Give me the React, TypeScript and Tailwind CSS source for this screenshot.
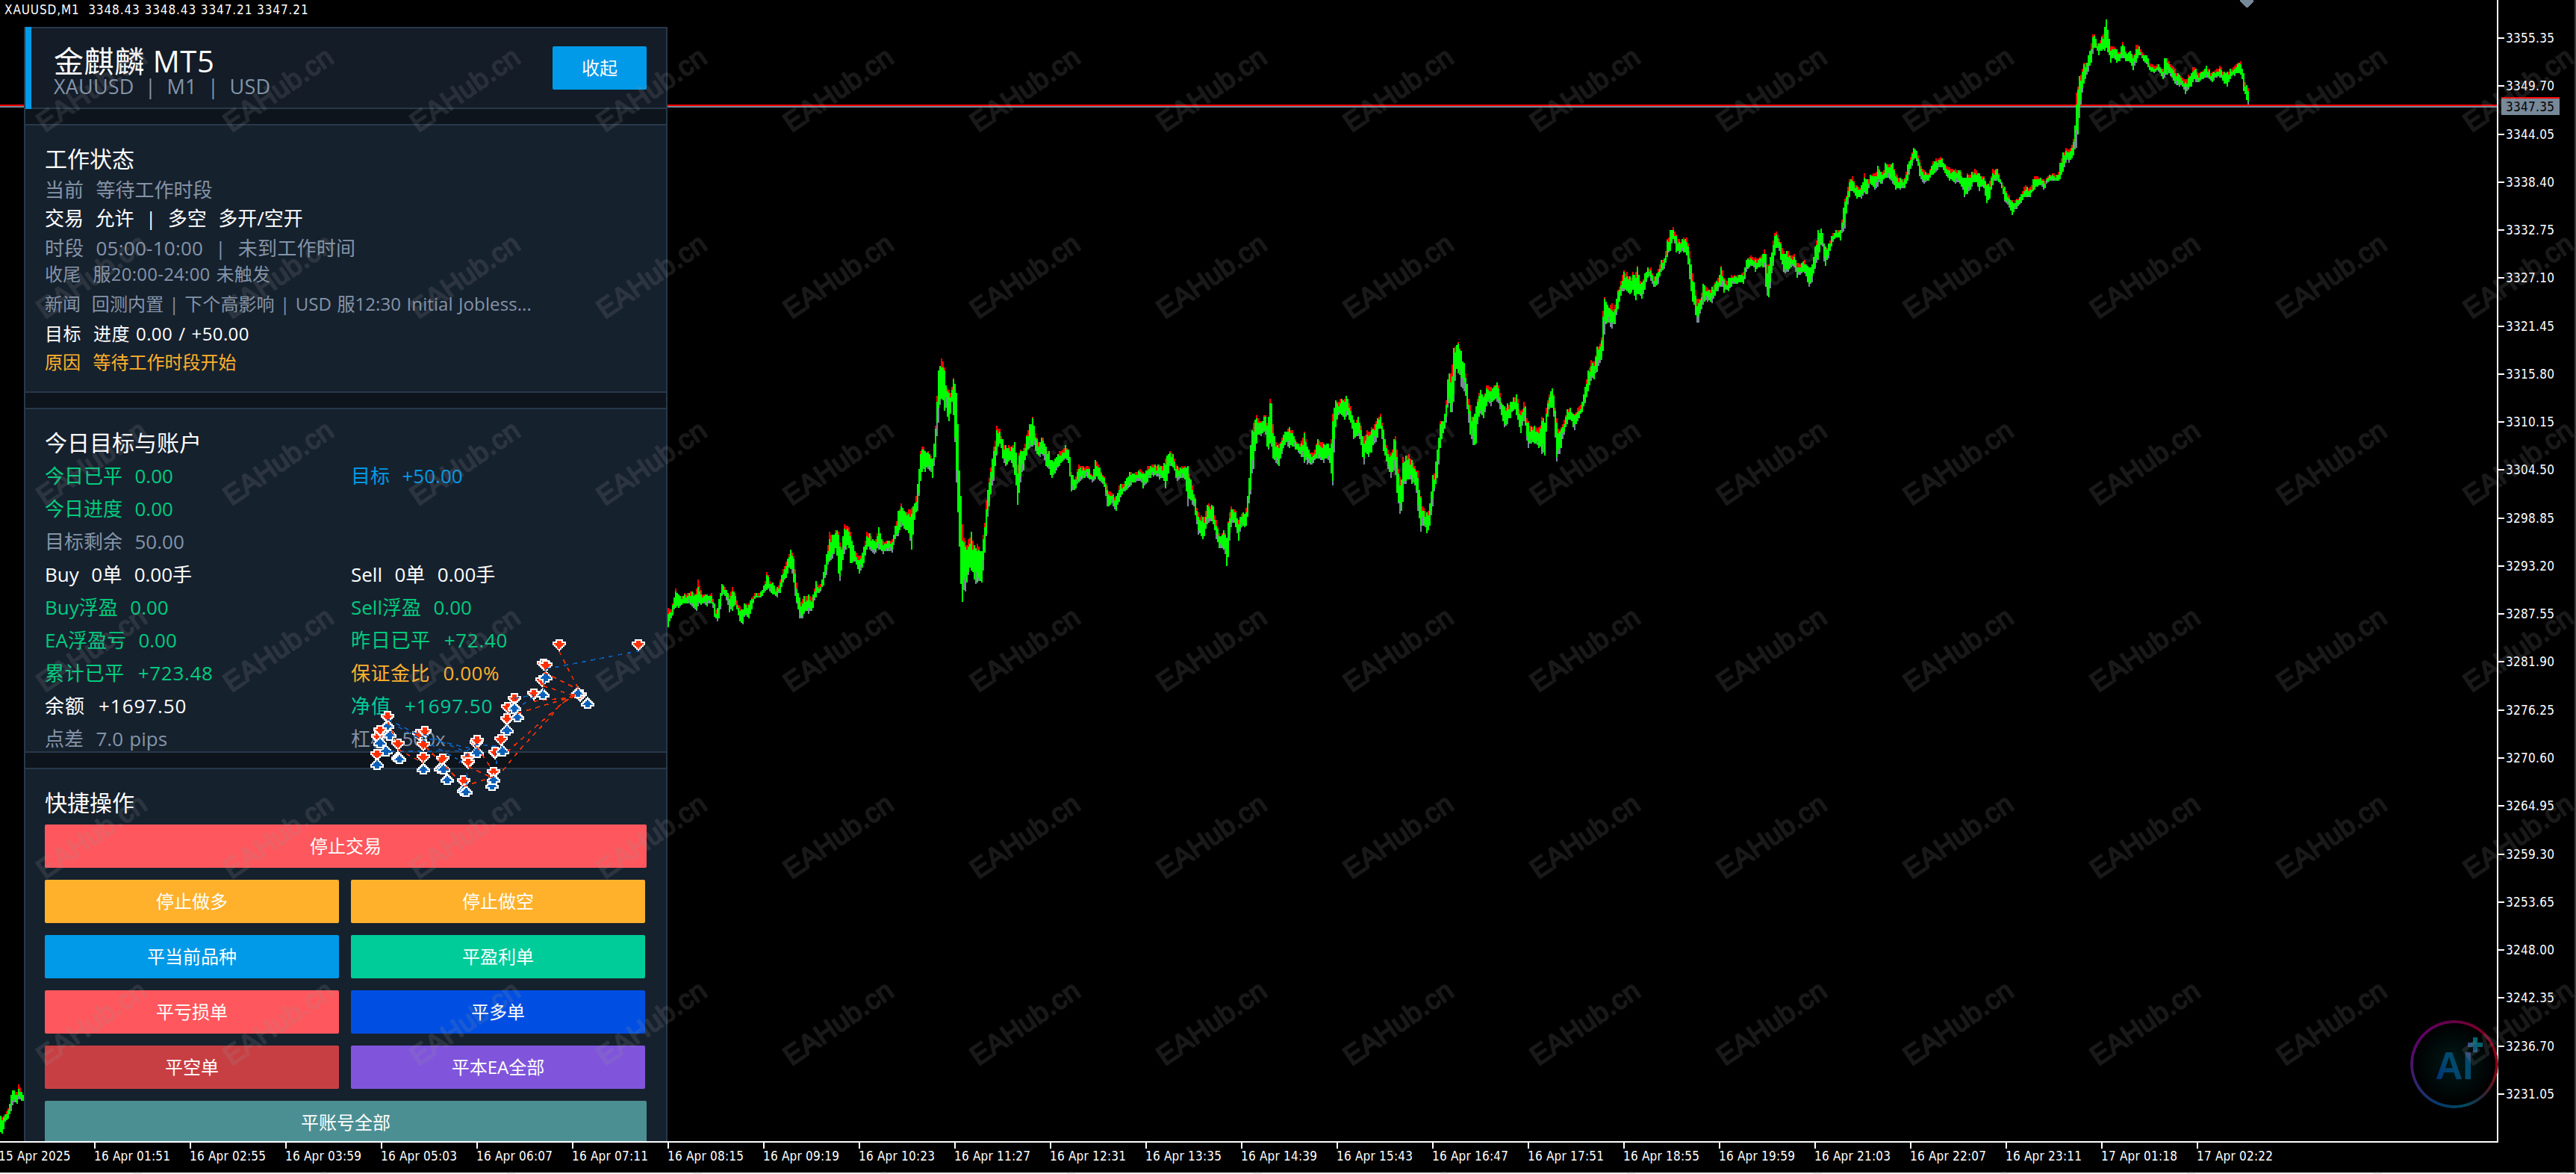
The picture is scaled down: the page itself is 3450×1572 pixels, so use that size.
import React from 'react';

interface Trace {
  x: number;
  y: number;
  sx: number;
  sy: number;
  points: string;
}

// every point is "x high low" in the local units of its trace
const TRACES: Trace[] = [
  {
    x: 0,
    y: 1420,
    sx: 1 / 3,
    sy: 1 / 3,
    points:
      '0 220 290,8 230 293,14 215 265,22 205 240,32 190 232,40 150 215,46 118 190,52 115 165,58 130 165,66 125 172,74 90 150,80 115 160,86 130 165,94 145 165',
  },
  {
    x: 880,
    y: 440,
    sx: 0.6378,
    sy: 1 / 3,
    points:
      '22 1120 1200,30 1120 1160,37 1040 1120,45 1075 1125,55 1065 1105,70 1055 1110,80 1060 1140,85 1005 1115,92 1060 1110,103 1068 1115,113 1062 1105,120 1110 1165,125 1130 1180,130 1070 1160,135 1022 1070,143 1045 1080,150 1070 1140,156 1035 1140,163 1060 1110,168 1105 1145,173 1120 1180,178 1130 1198,183 1100 1150,190 1110 1170,197 1085 1130,203 1062 1085,218 1055 1080,225 1020 1060,230 968 1050,237 1020 1060,243 1022 1070,250 1045 1080,257 1010 1060,263 970 1020,270 935 1000,278 890 955,284 893 1000,290 990 1100,297 1080 1165,303 1090 1175,308 1070 1140,316 1065 1145,325 1075 1130,332 1015 1080,340 1035 1060,347 990 1040,354 910 990,360 815 940,366 830 930,375 805 880,380 820 1000,384 880 1018,391 788 910,400 790 860,405 820 950,412 880 930,424 915 985,432 880 950,440 810 880,446 825 890,455 850 905,464 800 890,472 850 905,485 850 895,492 850 905,498 795 850,506 720 830,512 700 790,519 740 810,527 725 825,534 720 900,540 700 750,546 620 730,552 490 610,557 465 560,562 495 580,567 490 560,577 520 600,583 400 520,588 175 410,593 150 300,597 108 270,601 135 330,607 240 345,613 250 380,618 230 290,622 188 370,626 210 580,630 370 720,635 600 980,639 780 1105,645 850 1070,652 850 990,660 810 970,667 890 1030,672 855 1020,680 905 1030,685 800 950,690 690 830,697 590 700,705 480 620,712 388 510,718 400 460,725 450 530,732 470 560,738 465 530,745 470 545,751 455 600,756 550 715,760 480 640,768 480 570,774 430 510,780 390 480,788 350 470,795 430 500,802 460 520,807 430 500,815 470 550,821 490 560,827 530 605,835 520 580,845 490 545,857 465 520,864 480 560,868 570 655,876 610 650,883 545 620,895 555 600,905 550 600,912 590 620,920 518 600,928 560 610,937 590 630,945 640 730,952 655 700,962 680 735,970 620 690,980 620 655,992 570 635,1003 575 620,1013 565 610,1020 575 645,1030 550 610,1040 545 590,1055 545 605,1062 550 600,1066 520 645,1076 488 550,1083 510 560,1090 555 615,1100 550 600,1108 555 610,1112 540 720,1120 610 690,1128 670 740,1135 740 830,1146 760 850,1155 700 780,1165 700 770,1172 760 840,1180 830 890,1190 805 890,1195 840 958,1199 750 900,1205 710 780,1213 730 790,1219 770 855,1228 735 790,1234 745 810,1240 650 740,1246 430 650,1250 385 580,1259 340 440,1268 380 430,1275 340 410,1281 390 500,1287 250 450,1293 410 540,1303 470 560,1310 440 510,1318 410 460,1325 392 480,1332 405 470,1340 450 490,1350 460 510,1357 410 540,1365 480 550,1375 500 545,1387 440 520,1398 460 540,1407 455 520,1413 480 560,1418 325 640,1423 290 400,1433 280 340,1442 285 370,1447 265 350,1455 310 380,1462 370 450,1470 350 430,1477 390 470,1482 440 555,1488 405 500,1494 420 520,1500 390 490,1510 365 450,1517 338 390,1524 400 490,1532 480 560,1540 500 600,1548 415 560,1553 500 680,1560 620 760,1566 560 680',
  },
  {
    x: 1850,
    y: 180,
    sx: 0.574,
    sy: 0.3444,
    points:
      '50 1255 1390,57 1250 1350,64 1240 1340,70 1270 1360,78 1290 1365,84 1310 1470,90 1400 1545,97 1450 1520,106 1470 1555,112 1430 1520,118 1330 1450,124 1290 1370,130 1210 1330,136 1115 1220,145 1105 1150,150 1030 1120,155 910 1030,161 930 1090,166 835 1070,172 820 930,178 808 930,184 840 980,192 890 1000,198 960 1060,204 1040 1160,212 1100 1210,219 1060 1210,225 1010 1100,231 988 1080,238 1020 1110,245 970 1050,255 985 1060,263 970 1030,270 960 1040,277 1020 1080,285 1060 1140,291 1045 1135,300 1040 1100,307 1020 1070,315 1005 1095,323 1080 1165,332 1035 1110,340 1110 1220,350 1135 1200,357 1135 1200,365 1145 1215,374 1090 1245,380 1120 1250,385 1030 1110,396 980 1050,401 1010 1100,408 1110 1280,415 1150 1240,425 1110 1170,433 1065 1120,440 1060 1110,448 1090 1160,457 1060 1110,467 1040 1080,475 970 1040,482 910 990,487 875 960,495 885 955,503 815 920,513 790 870,516 670 840,520 620 760,527 670 730,535 655 760,543 670 740,549 610 690,557 570 630,564 525 610,571 535 610,580 555 625,586 535 600,591 540 650,596 510 620,603 570 630,608 575 645,614 535 600,621 515 550,628 520 570,635 555 595,643 530 595,650 490 540,660 480 520,666 400 470,673 370 450,680 360 400,686 390 460,694 410 465,703 402 460,711 402 470,717 440 550,723 520 640,730 590 690,737 640 745,744 630 690,750 575 660,760 600 650,770 590 655,778 570 620,785 555 605,792 500 590,798 560 615,808 560 610,815 548 590,830 545 580,845 530 580,851 480 530,862 470 510,872 480 535,882 475 515,893 445 520,897 480 640,901 520 648,907 470 590,913 410 510,918 368 450,925 395 440,932 425 500,938 460 540,946 445 540,953 470 520,962 465 515,968 500 560,978 500 540,987 485 540,995 520 595,1003 510 580,1011 430 520,1017 370 490,1026 362 420,1033 440 515,1041 430 490,1050 390 430,1060 368 400,1070 370 410,1076 290 380,1080 250 370,1086 215 280,1091 170 240,1098 165 220,1108 200 250,1117 205 255,1126 150 225,1131 180 240,1140 155 190,1150 150 215,1158 118 200,1168 150 190,1174 110 170,1184 120 170,1191 105 190,1198 150 215,1210 170 215,1220 170 210,1228 105 170,1236 75 125,1242 48 90,1249 70 110,1256 110 180,1265 140 190,1275 150 180,1284 105 160,1294 93 145,1305 88 125,1314 120 155,1325 130 180,1338 135 190,1350 140 190,1358 170 245,1367 150 230,1375 150 210,1385 130 180,1394 150 220,1403 155 200,1411 190 265,1417 190 260,1426 130 190,1436 135 180,1445 180 205,1453 205 260,1463 235 285,1471 260 318,1480 250 290,1490 240 270,1500 195 240,1511 210 250,1522 160 215,1535 165 195,1545 175 215,1556 158 180,1567 150 180',
  },
  {
    x: 2650,
    y: 0,
    sx: 0.5102,
    sy: 1 / 3,
    points:
      '195 700 725,207 697 730,213 640 720,220 610 690,228 595 650,236 600 655,246 570 630,251 500 600,256 330 590,262 305 480,268 300 400,273 250 345,280 255 310,286 220 290,293 180 260,299 128 205,305 155 185,312 180 225,320 150 200,328 130 210,332 68 190,337 120 210,345 185 255,352 185 230,360 195 255,368 210 250,377 165 230,385 210 250,395 200 250,404 225 280,413 175 250,420 185 220,430 215 245,440 222 260,450 255 290,460 262 295,470 260 285,482 280 320,488 212 310,494 235 300,503 260 310,515 280 340,525 300 350,533 310 345,540 320 378,548 300 360,556 300 350,562 262 320,570 280 335,580 290 325,597 265 310,610 290 335,622 275 310,633 265 310,643 290 335,652 290 350,660 275 310,672 265 305,680 250 290,687 247 300,693 290 360,700 335 390,707 360 430',
  },
];

const snap = (n: number) => Math.round(n / 2) * 2;

function buildBars() {
  let seed = 11;
  const rand = () => {
    seed = (seed * 16807) % 2147483647;
    return seed / 2147483647;
  };
  let up = '';
  let mid = '';
  let down = '';
  for (const t of TRACES) {
    const pts = t.points.split(',').map((p) => {
      const [x, hi, lo] = p.split(' ').map(Number);
      return { x: t.x + x * t.sx, hi: t.y + hi * t.sy, lo: t.y + lo * t.sy };
    });
    let i = 0;
    for (let x = snap(pts[0].x); x <= pts[pts.length - 1].x + 1; x += 2) {
      while (i < pts.length - 2 && pts[i + 1].x < x) i++;
      const a = pts[i];
      const b = pts[i + 1];
      const k = Math.min(1, Math.max(0, (x - a.x) / (b.x - a.x)));
      const peak = Math.abs(x - a.x) <= 1 || Math.abs(x - b.x) <= 1;
      const range = a.lo - a.hi + (b.lo - b.hi - a.lo + a.hi) * k;
      const wobble = peak ? 0 : range * 0.16;
      const hi = snap(a.hi + (b.hi - a.hi) * k + rand() * wobble);
      const lo = snap(a.lo + (b.lo - a.lo) * k - rand() * wobble);
      const top = rand() < 0.4 ? hi : snap(hi + 2 + rand() * range * 0.22);
      const bottom = rand() < 0.5 ? lo : snap(lo - rand() * range * 0.35);
      up += `M${x + 1} ${hi}V${top}`;
      mid += `M${x + 1} ${top}V${bottom}`;
      down += `M${x + 1} ${bottom}V${lo}`;
    }
  }
  return { up, mid, down };
}

const BARS = buildBars();

function PriceChart() {
  return (
    <svg className="block" width="3344" height="1528" viewBox="0 0 3344 1528" shapeRendering="crispEdges">
      <rect x="0" y="140" width="3344" height="2" fill="#ff0000" />
      <rect x="0" y="142" width="3344" height="2" fill="#778899" />
      <path d={BARS.up} stroke="#ff0000" strokeWidth="2" />
      <path d={BARS.down} stroke="#778899" strokeWidth="2" />
      <path d={BARS.mid} stroke="#00ff00" strokeWidth="2" />
      <path d="M3000 0H3018V2L3010 10H3008L3000 2Z" fill="#778899" />
    </svg>
  );
}

const PRICES = Array.from({ length: 23 }, (_, i) => (3355.35 - i * 5.65).toFixed(2));

const TIMES = [
  '16 Apr 01:51', '16 Apr 02:55', '16 Apr 03:59', '16 Apr 05:03', '16 Apr 06:07', '16 Apr 07:11',
  '16 Apr 08:15', '16 Apr 09:19', '16 Apr 10:23', '16 Apr 11:27', '16 Apr 12:31', '16 Apr 13:35',
  '16 Apr 14:39', '16 Apr 15:43', '16 Apr 16:47', '16 Apr 17:51', '16 Apr 18:55', '16 Apr 19:59',
  '16 Apr 21:03', '16 Apr 22:07', '16 Apr 23:11', '17 Apr 01:18', '17 Apr 02:22',
];

function PriceAxis() {
  return (
    <div className="relative w-[106px] h-[1530px] border-l-2 border-white tracking-[0.3px]">
      <div className="h-[1474px] pt-[42px] flex flex-col justify-between">
        {PRICES.map((p) => (
          <div key={p} className="flex items-center h-[18px]">
            <span className="w-2 h-0.5 bg-white" />
            <span className="ml-0.5 leading-[18px]">{p}</span>
          </div>
        ))}
      </div>
      <div className="absolute left-1 top-[130px] w-[78px] h-6 border-t-2 border-[#ff0000] bg-[#778899] pl-1.5 leading-[22px] text-black">
        3347.35
      </div>
    </div>
  );
}

function TimeAxis() {
  return (
    <div className="flex h-10 overflow-hidden whitespace-nowrap tracking-[0.2px]">
      <div className="w-[126px] shrink-0 pt-[9px] -indent-0.5 leading-[18px]">15 Apr 2025</div>
      {TIMES.map((t) => (
        <div key={t} className="w-32 shrink-0">
          <div className="w-0.5 h-2 bg-white" />
          <div className="pt-px leading-[18px]">{t}</div>
        </div>
      ))}
    </div>
  );
}

const STATUS = [
  { text: '当前  等待工作时段', cls: 'mt-[9px] text-[26px] [word-spacing:1.5px] text-[#8494a8]' },
  { text: '交易  允许  |  多空  多开/空开', cls: 'mt-1.5 text-[26px] [word-spacing:1px] text-white' },
  { text: '时段  05:00-10:00  |  未到工作时间', cls: 'mt-2 text-[26px] tracking-[0.25px] [word-spacing:1px] text-[#8494a8]' },
  { text: '收尾  服20:00-24:00 未触发', cls: 'mt-[3px] text-[24px] tracking-[0.25px] [word-spacing:1.5px] text-[#8494a8]' },
  { text: '新闻  回测内置 | 下个高影响 | USD 服12:30 Initial Jobless...', cls: 'mt-2 text-[24px] tracking-[0.1px] [word-spacing:1px] text-[#8494a8]' },
  { text: '目标  进度 0.00 / +50.00', cls: 'mt-2 text-[24px] tracking-[0.4px] [word-spacing:1.5px] text-white' },
  { text: '原因  等待工作时段开始', cls: 'mt-1.5 text-[24px] [word-spacing:2px] text-[#ffb12b]' },
];

const ACCOUNT = [
  { text: '今日已平  0.00', cls: 'text-[#00cc7e]' },
  { text: '目标  +50.00', cls: 'text-[#009ae8]' },
  { text: '今日进度  0.00', cls: 'text-[#00cc7e]' },
  { text: '', cls: '' },
  { text: '目标剩余  50.00', cls: 'text-[#8494a8]' },
  { text: '', cls: '' },
  { text: 'Buy  0单  0.00手', cls: 'text-white' },
  { text: 'Sell  0单  0.00手', cls: 'text-white' },
  { text: 'Buy浮盈  0.00', cls: 'text-[#00cc7e]' },
  { text: 'Sell浮盈  0.00', cls: 'text-[#00cc7e]' },
  { text: 'EA浮盈亏  0.00', cls: 'text-[#00cc7e]' },
  { text: '昨日已平  +72.40', cls: 'tracking-[0.7px] text-[#00cc7e]' },
  { text: '累计已平  +723.48', cls: 'tracking-[0.7px] text-[#00cc7e]' },
  { text: '保证金比  0.00%', cls: 'tracking-[0.5px] text-[#ffb12b]' },
  { text: '余额  +1697.50', cls: 'tracking-[0.9px] text-white' },
  { text: '净值  +1697.50', cls: 'tracking-[0.9px] text-[#00cc99]' },
  { text: '点差  7.0 pips', cls: 'text-[#8494a8]' },
  { text: '杠杆  500x', cls: 'text-[#8494a8]' },
];

const ACTIONS = [
  { text: '停止交易', cls: 'col-span-2 w-[806px] bg-[#ff575d]' },
  { text: '停止做多', cls: 'bg-[#ffb12b]' },
  { text: '停止做空', cls: 'bg-[#ffb12b]' },
  { text: '平当前品种', cls: 'bg-[#009ae8]' },
  { text: '平盈利单', cls: 'bg-[#00cc99]' },
  { text: '平亏损单', cls: 'bg-[#ff575d]' },
  { text: '平多单', cls: 'bg-[#004fe2]' },
  { text: '平空单', cls: 'bg-[#c83f43]' },
  { text: '平本EA全部', cls: 'bg-[#8055dc]' },
  { text: '平账号全部', cls: 'col-span-2 w-[806px] bg-[#4c8f93]' },
];

function Panel() {
  return (
    <aside className="absolute left-8 top-9 w-[862px] h-[1492px] overflow-hidden bg-[#0d141b] border-x-2 border-[#28384a] flex flex-col gap-5 whitespace-pre [font-stretch:normal] font-['Open_Sans','Noto_Sans_CJK_SC',sans-serif]">
      <header className="relative h-[110px] shrink-0 bg-[#131c27] border-y-2 border-[#28384a] flex justify-between pl-[38px] pr-[26px]">
        <div className="absolute left-0 -top-0.5 w-2 h-[110px] bg-[#009ae8]" />
        <div className="pt-[23px]">
          <h1 className="text-[40px] leading-[42px] tracking-[0.6px] text-white">金麒麟 MT5</h1>
          <p className="text-[27px] leading-[26px] tracking-[0.2px] text-[#8494a8]">XAUUSD  |  M1  |  USD</p>
        </div>
        <button className="mt-6 w-[126px] h-[58px] rounded-[2px] bg-[#009ae8] text-[24px] text-white">收起</button>
      </header>

      <section className="h-[360px] shrink-0 bg-[#16212e] border-y-2 border-[#28384a] pl-[26px] pt-[29px]">
        <h2 className="text-[30px] leading-8 text-white">工作状态</h2>
        {STATUS.map((row) => (
          <p key={row.text} className={`h-8 leading-8 ${row.cls}`}>{row.text}</p>
        ))}
      </section>

      <section className="h-[462px] shrink-0 bg-[#16212e] border-y-2 border-[#28384a] pl-[26px] pt-[29px]">
        <h2 className="text-[30px] leading-8 text-white">今日目标与账户</h2>
        <div className="mt-1.5 grid grid-cols-[410px_1fr] auto-rows-[44px] text-[26px] leading-[44px] [word-spacing:1.5px]">
          {ACCOUNT.map((cell, i) => (
            <span key={i} className={cell.cls}>{cell.text}</span>
          ))}
        </div>
      </section>

      <section className="h-[600px] shrink-0 bg-[#16212e] border-y-2 border-[#28384a] pl-[26px] pt-[29px]">
        <h2 className="text-[30px] leading-8 text-white">快捷操作</h2>
        <div className="mt-[13px] grid grid-cols-[394px_394px] gap-4 text-[24px] text-white">
          {ACTIONS.map((a) => (
            <button key={a.text} className={`h-[58px] rounded-[2px] ${a.cls}`}>{a.text}</button>
          ))}
        </div>
      </section>
    </aside>
  );
}

const LINKS: [string, string][] = [
  ['#0a60b8', 'M118 370L270 445L476 492M752 168L1125 95M627 285L704 272M90 498L500 496M265 430L430 500L476 470L579 480M704 280L660 310M441 505L390 560M752 170L741 270M555 550L549 480M433 640L437 580M160 400L400 530'],
  ['#ff3000', 'M806 96L883 245M745 180L883 250M741 235L880 278M704 297L860 282M640 345L875 275M597 500L870 262M580 575L650 490L785 345L770 330M421 640L543 600M270 480L400 610M118 380L155 460M159 490L261 545M441 560L540 605M476 480L543 580M339 540L290 505M800 320L870 270M745 240L741 215'],
];

type Deal = [number, number, 's' | 'b'];
const DEALS: Deal[] = [
  [806, 70, 's'], [1125, 70, 's'], [745, 148, 's'], [752, 154, 's'], [737, 214, 's'], [752, 200, 'b'],
  [704, 267, 's'], [741, 270, 'b'], [890, 272, 's'], [883, 264, 'b'], [921, 306, 'b'], [627, 287, 's'],
  [601, 322, 's'], [627, 325, 'b'], [597, 368, 's'], [639, 360, 'b'], [597, 413, 'b'], [572, 451, 's'],
  [549, 503, 's'], [579, 497, 'b'], [473, 466, 's'], [476, 455, 's'], [476, 503, 'b'], [437, 524, 's'],
  [441, 543, 's'], [422, 617, 's'], [422, 655, 'b'], [433, 660, 'b'], [537, 636, 'b'], [543, 582, 's'],
  [543, 612, 'b'], [339, 528, 's'], [330, 567, 'b'], [342, 569, 'b'], [357, 612, 'b'], [242, 430, 's'],
  [261, 472, 's'], [266, 419, 's'], [261, 523, 's'], [261, 570, 'b'], [118, 396, 'b'], [118, 359, 's'],
  [78, 440, 's'], [88, 414, 's'], [127, 433, 'b'], [87, 464, 'b'], [110, 497, 'b'], [159, 469, 's'],
  [160, 522, 'b'], [165, 528, 'b'], [75, 511, 's'], [75, 551, 'b'],
];

function DealMarks() {
  return (
    <svg className="absolute left-[480px] top-[840px]" width="400" height="240" viewBox="0 0 1200 720" shapeRendering="crispEdges">
      {DEALS.map(([x, y, side], i) => (
        <g key={i} transform={`translate(${x} ${y}) scale(${side === 's' ? 1 : -1})`}>
          <path
            d="M-15 -22H15V-12H27V3H21V9H15V15H9V21H3V27H-3V21H-9V15H-15V9H-21V3H-27V-12H-15Z"
            fill="#ffffff"
          />
          <path
            d="M-9 -16H9V-6H21V-2H15V4H9V10H4V16H-4V10H-9V4H-15V-2H-21V-6H-9Z"
            fill={side === 's' ? '#ff3000' : '#0a60b8'}
          />
        </g>
      ))}
      {LINKS.map(([color, d]) => (
        <path key={color} d={d} fill="none" stroke={color} strokeWidth="5" strokeDasharray="18 19" />
      ))}
    </svg>
  );
}

function AiBadge() {
  return (
    <svg className="absolute left-[3227px] top-[1364px]" width="120" height="120" viewBox="0 0 120 120">
      <defs>
        <radialGradient id="glow">
          <stop offset="0" stopColor="#001a18" />
          <stop offset="1" stopColor="#000000" />
        </radialGradient>
        <linearGradient id="letters" x1="0" y1="1" x2="1" y2="0">
          <stop offset="0" stopColor="#002a78" />
          <stop offset="0.5" stopColor="#004a70" />
          <stop offset="0.72" stopColor="#004a70" />
          <stop offset="1" stopColor="#6a3a86" />
        </linearGradient>
        <linearGradient id="plus" x1="0" y1="0.8" x2="1" y2="0.3">
          <stop offset="0" stopColor="#40408a" />
          <stop offset="0.6" stopColor="#006470" />
        </linearGradient>
      </defs>
      <circle cx="60" cy="60.5" r="55" fill="url(#glow)" />
      <foreignObject x="0" y="0" width="120" height="121">
        <div className="mt-[1.5px] ml-px size-[118px] rounded-full bg-[conic-gradient(#660044,#780028_40deg,#8c0014_80deg,#7c0a12_105deg,#26283c_140deg,#004a5c_165deg,#003c68_195deg,#2a2a6a_235deg,#50106c_275deg,#600060_320deg,#660044)] [mask:radial-gradient(closest-side,transparent_54.5px,black_55.5px)]" />
      </foreignObject>
      <text x="34.5" y="81" fontSize="51" fontWeight="700" fill="url(#letters)" className="[font-stretch:normal] font-['Liberation_Sans',sans-serif]">AI</text>
      <path d="M85 25H91V32H98V38H91V45H85V38H78V32H85Z" fill="url(#plus)" />
    </svg>
  );
}

function Watermarks() {
  const cells: React.ReactNode[] = [];
  for (let r = 0; r < 7; r++) {
    for (let c = 0; c < 14; c++) {
      cells.push(
        <text
          key={`${r}-${c}`}
          transform={`translate(${60 + c * 250} ${178 + r * 250}) rotate(-34.5)`}
          textLength="169"
          fontSize="37"
          fill="#969696"
          stroke="#969696"
          strokeWidth="2"
          strokeLinejoin="round"
          opacity="0.17"
        >
          EAHub.cn
        </text>
      );
    }
  }
  return (
    <svg className="absolute inset-0 [font-stretch:normal] font-['Liberation_Sans',sans-serif]" width="3450" height="1572" viewBox="0 0 3450 1572">
      {cells}
    </svg>
  );
}

export default function App() {
  return (
    <main className="relative w-[3450px] h-[1572px] overflow-hidden bg-black text-white text-[17px] border-r-2 border-[#3c3c3c] font-['DejaVu_Sans_Condensed','DejaVu_Sans',sans-serif] [font-stretch:condensed]">
      <div className="flex">
        <div className="w-[3344px] h-[1530px] shrink-0 border-b-2 border-white">
          <PriceChart />
        </div>
        <PriceAxis />
      </div>
      <TimeAxis />
      <div className="w-[3450px] h-0.5 bg-[#f0f0f0]" />

      <p className="absolute left-[6px] top-[4px] leading-[18px] whitespace-pre tracking-[0.9px]">XAUUSD,M1  3348.43 3348.43 3347.21 3347.21</p>
      <Panel />
      <DealMarks />
      <AiBadge />
      <Watermarks />
    </main>
  );
}
